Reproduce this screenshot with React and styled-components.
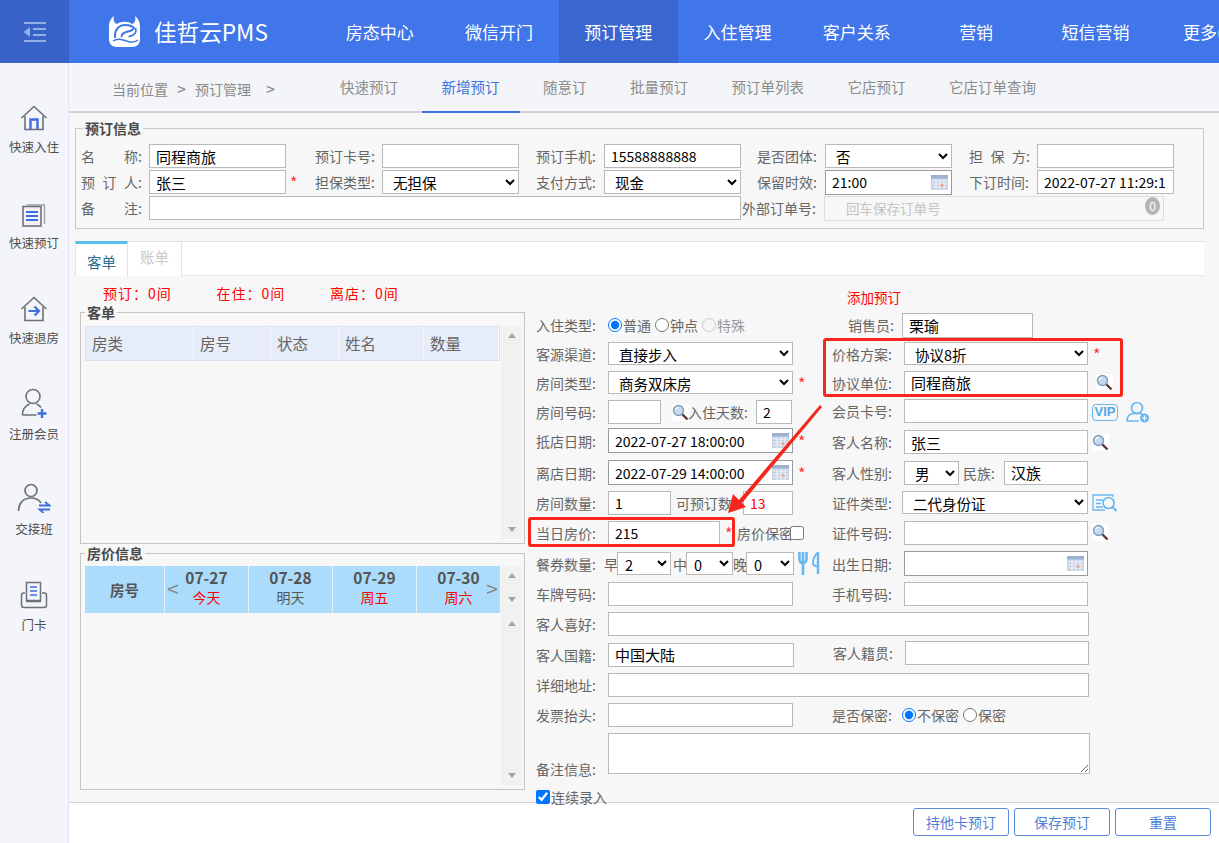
import React from 'react';
import styled, { createGlobalStyle } from 'styled-components';

const GlobalStyle = createGlobalStyle`
  html, body {
    margin: 0;
    height: 100%;
    overflow: hidden;
    background: #fff;
  }
  body, input, select, textarea, button {
    font-family: "Noto Sans CJK SC", "Liberation Sans", sans-serif;
  }
  * {
    box-sizing: border-box;
  }
`;

const NAV = ['房态中心', '微信开门', '预订管理', '入住管理', '客户关系', '营销', '短信营销', '更多('];
const SUB = ['快速预订', '新增预订', '随意订', '批量预订', '预订单列表', '它店预订', '它店订单查询'];

const HomeIcon = () => (
  <svg width="28" height="26" viewBox="0 0 28 26" fill="none">
    <path d="M1.5 13 14 1.5 26.5 13" stroke="#6d7178" strokeWidth="1.6" />
    <path d="M5 11v13.5h18V11" stroke="#6d7178" strokeWidth="1.6" />
    <path d="M10.5 24v-9.5h7V24" stroke="#3f6fdc" strokeWidth="2.4" />
  </svg>
);
const BookIcon = () => (
  <svg width="24" height="24" viewBox="0 0 24 24" fill="none">
    <rect x="1" y="3.5" width="18" height="19.5" stroke="#6d7178" strokeWidth="1.6" />
    <path d="M5 2h17.5v19" stroke="#9a9da3" strokeWidth="1.3" />
    <path d="M4 9h12M4 13h12M4 17h12" stroke="#3f6fdc" strokeWidth="2" />
  </svg>
);
const CheckoutIcon = () => (
  <svg width="28" height="26" viewBox="0 0 28 26" fill="none">
    <path d="M1.5 13 14 1.5 26.5 13" stroke="#6d7178" strokeWidth="1.6" />
    <path d="M5 11v13.5h18V11" stroke="#6d7178" strokeWidth="1.6" />
    <path d="M8.5 15h10M14.5 10.5 19 15l-4.5 4.5" stroke="#3f6fdc" strokeWidth="2.2" />
  </svg>
);
const MemberIcon = () => (
  <svg width="26" height="30" viewBox="0 0 26 30" fill="none">
    <circle cx="12" cy="8.5" r="7" stroke="#6d7178" strokeWidth="1.6" />
    <path d="M1.5 27c0-6 3.5-9.5 7-11M15.5 16c2 .8 3.5 1.8 4.5 3.5M1.5 27h14" stroke="#6d7178" strokeWidth="1.6" />
    <path d="M21 21v9M16.5 25.5h9" stroke="#3f6fdc" strokeWidth="2.4" />
  </svg>
);
const ShiftIcon = () => (
  <svg width="34" height="30" viewBox="0 0 34 30" fill="none">
    <circle cx="14" cy="7.5" r="6" stroke="#6d7178" strokeWidth="1.7" />
    <path d="M1.5 28c0-8 5-13 12.5-13 4.5 0 8 2 10 5" stroke="#6d7178" strokeWidth="1.7" />
    <path d="M22 22.5h10.5L28 19M33 26.5H22.5l4 3.5" stroke="#3f6fdc" strokeWidth="1.8" />
  </svg>
);
const CardIcon = () => (
  <svg width="28" height="28" viewBox="0 0 28 28" fill="none">
    <path d="M6.5 1.5h14v18h-14z" stroke="#6d7178" strokeWidth="1.5" />
    <path d="M10 6h7M10 10h7M10 14h7" stroke="#3f6fdc" strokeWidth="1.5" />
    <path d="M5 12H3.500C2 12 1.500 13 1.500 14.500V24c0 1.500 1 2.500 2.500 2.500h20c1.500 0 2.500-1 2.500-2.500v-9.500c0-1.500-.5-2.500-2-2.500H22M6 20.500h15" stroke="#6d7178" strokeWidth="1.5" />
  </svg>
);
const SIDE = [
  ['快速入住', HomeIcon],
  ['快速预订', BookIcon],
  ['快速退房', CheckoutIcon],
  ['注册会员', MemberIcon],
  ['交接班', ShiftIcon],
  ['门卡', CardIcon],
];

const Calendar = () => (
  <svg width="17" height="15" viewBox="0 0 17 15">
    <rect width="17" height="15" rx="1" fill="#c6d3e6" />
    <rect width="17" height="3.5" fill="#9db2d2" />
    <path d="M1 6h15M1 9h15M1 12h15M5 4v11M9 4v11M13 4v11" stroke="#eef2f8" strokeWidth="1" />
    <rect x="9.5" y="9" width="3" height="3" fill="#eda8a0" />
  </svg>
);
const Magnifier = () => (
  <svg width="17" height="17" viewBox="0 0 17 17">
    <rect width="17" height="17" fill="#fff" />
    <path d="m10 10 5.5 5.5" stroke="#5d3a2c" strokeWidth="2.4" />
    <circle cx="6.5" cy="6.5" r="5" fill="#c5d9ee" stroke="#7f9cbc" strokeWidth="1.4" />
    <path d="M3.5 6c.3-1.5 1.2-2.3 2.700-2.600" stroke="#fff" strokeWidth="1.2" fill="none" />
  </svg>
);
const UserPlus = () => (
  <svg width="24" height="22" viewBox="0 0 24 22" fill="none">
    <circle cx="11" cy="7" r="5.5" stroke="#67b7f2" strokeWidth="1.7" />
    <path d="M1 20c0-4.500 2.500-7 6-7.500h7c1.500.3 2.500 1 3.500 2M1 20h12" stroke="#67b7f2" strokeWidth="1.7" />
    <circle cx="18.5" cy="17" r="4.5" fill="#67b7f2" />
    <path d="M16 17h5M18.500 14.500v5" stroke="#fff" strokeWidth="1.2" />
  </svg>
);
const IdSearch = () => (
  <svg width="25" height="18" viewBox="0 0 25 18" fill="none">
    <path d="M21 3V1H1v15h12" stroke="#67b7f2" strokeWidth="1.3" />
    <path d="M4 6h7M4 9.5h5M4 13h7" stroke="#67b7f2" strokeWidth="1.3" />
    <circle cx="16.5" cy="9" r="5.5" stroke="#67b7f2" strokeWidth="1.6" />
    <path d="m20.5 13 4 4" stroke="#67b7f2" strokeWidth="2" />
  </svg>
);
const Cutlery = () => (
  <svg width="22" height="23" viewBox="0 0 22 23" fill="none">
    <path d="M1.5 0v7c0 2.500 1.500 4 3.500 4s3.500-1.500 3.500-4V0M5 0v23" stroke="#67b7f2" strokeWidth="2.6" />
    <path d="M20 0v22" stroke="#67b7f2" strokeWidth="2.4" />
    <path d="M19.500 1c-3 2-4.500 7-4.500 10 0 2 1 3 4.500 3.500" stroke="#67b7f2" strokeWidth="2" />
  </svg>
);

const App = () => (
  <Page>
    <GlobalStyle />
    <Header>
      <Toggle>
        <svg width="24" height="20" viewBox="0 0 24 20" fill="none">
          <path d="M1 1h22M10 7h13M10 13h13M1 19h22" stroke="#94aee6" strokeWidth="1.8" />
          <path d="M7 5v10L0.5 10z" fill="#94aee6" />
        </svg>
      </Toggle>
      <Brand>
        <svg width="33" height="33" viewBox="0 0 33 33" fill="none">
          <path
            fill="#fff"
            d="M6 1C2 4 1 8 1 12v12c0 5 3 8 8 8h15c5 0 8-3 8-8V12c0-4-1-8-5-11 1 4 0 7-3 8-4-3-11-3-15 0C6 8 5 5 6 1z"
          />
          <path d="M7 23C6 15 11 10 17 10c4 0 7 1 9 3-2 4-7 3-10 5-2 1-3 3-2 4" stroke="#4076e9" strokeWidth="2" />
          <path d="M27.500 13c1.500 4-1 8-7 8.500" stroke="#4076e9" strokeWidth="1.6" />
          <path d="M5 26c5-3.500 10-1 15 .5 4 1.200 7 .8 10-1.500" stroke="#4076e9" strokeWidth="1.5" />
        </svg>
        <BrandName>佳哲云PMS</BrandName>
      </Brand>
      <Nav>
        {NAV.map((n, i) => (
          <NavItem key={n} $active={n === '预订管理'} $last={i === NAV.length - 1}>{n}</NavItem>
        ))}
      </Nav>
    </Header>
    <Body>
      <Sidebar>
        {SIDE.map(([label, Icon]) => (
          <SideItem key={label}>
            <SideIcon><Icon /></SideIcon>
            <span>{label}</span>
          </SideItem>
        ))}
      </Sidebar>
      <Content>
        <SubBar>
          <Crumb>当前位置<CrumbSep>&gt;</CrumbSep>预订管理<CrumbSep $wide>&gt;</CrumbSep></Crumb>
          <SubTabs>
            {SUB.map((s) => (
              <SubTab key={s} $active={s === '新增预订'}>{s}</SubTab>
            ))}
          </SubTabs>
        </SubBar>
        <Main>
          <InfoBox>
            <Legend>预订信息</Legend>
            <InfoRow>
              <Label $w={68} $spread $pr={7}><span>名</span><span>称:</span></Label>
              <TextInput $w={137} $cn defaultValue="同程商旅" />
              <Label $w={60} $ml={29}>预订卡号:</Label>
              <TextInput $w={137} $ml={7} />
              <Label $w={60} $ml={17}>预订手机:</Label>
              <TextInput $w={137} $ml={8} defaultValue="15588888888" />
              <Label $w={60} $ml={16}>是否团体:</Label>
              <Select $w={127} $ml={8}><option>否</option></Select>
              <Label $w={61} $ml={17} $spread><span>担</span><span>保</span><span>方:</span></Label>
              <TextInput $w={137} $ml={7} />
            </InfoRow>
            <InfoRow>
              <Label $w={68} $spread $pr={7}><span>预</span><span>订</span><span>人:</span></Label>
              <TextInput $w={137} $cn defaultValue="张三" />
              <Star $w={25} $ml={4}>*</Star>
              <Label $w={60}>担保类型:</Label>
              <Select $w={137} $ml={7}><option>无担保</option></Select>
              <Label $w={60} $ml={17}>支付方式:</Label>
              <Select $w={137} $ml={8}><option>现金</option></Select>
              <Label $w={60} $ml={16}>保留时效:</Label>
              <DateBox $w={127} $ml={8} value="21:00" />
              <Label $w={61} $ml={17}>下订时间:</Label>
              <TextInput $w={137} $ml={7} defaultValue="2022-07-27 11:29:11" />
            </InfoRow>
            <InfoRow>
              <Label $w={68} $spread $pr={7}><span>备</span><span>注:</span></Label>
              <TextInput $w={592} />
              <Label $w={75} $ml={1}>外部订单号:</Label>
              <OrderBox>
                回车保存订单号
                <OrderBadge>0</OrderBadge>
              </OrderBox>
            </InfoRow>
          </InfoBox>

          <TabBar>
            <Tab $active>客单</Tab>
            <Tab>账单</Tab>
          </TabBar>

          <Columns>
            <LeftCol>
              <Stats>
                <span>预订：0间</span>
                <span>在住：0间</span>
                <span>离店：0间</span>
              </Stats>
              <GuestBox>
                <Legend $small>客单</Legend>
                <TableWrap>
                  <TableMain>
                    <GuestHead>
                      {['房类', '房号', '状态', '姓名', '数量'].map((h) => (
                        <span key={h}>{h}</span>
                      ))}
                    </GuestHead>
                  </TableMain>
                  <ScrollBar>
                    <Arrow $up />
                    <Arrow />
                  </ScrollBar>
                </TableWrap>
              </GuestBox>
              <PriceBox>
                <Legend $small>房价信息</Legend>
                <TableWrap>
                  <TableMain>
                    <PriceHead>
                      <PriceRoom>房号</PriceRoom>
                      <PriceDay>
                        <Pager $left>&lt;</Pager>
                        <b>07-27</b>
                        <DayName $red>今天</DayName>
                      </PriceDay>
                      <PriceDay>
                        <b>07-28</b>
                        <DayName>明天</DayName>
                      </PriceDay>
                      <PriceDay>
                        <b>07-29</b>
                        <DayName $red>周五</DayName>
                      </PriceDay>
                      <PriceDay>
                        <b>07-30</b>
                        <DayName $red>周六</DayName>
                        <Pager>&gt;</Pager>
                      </PriceDay>
                    </PriceHead>
                  </TableMain>
                  <ScrollBar>
                    <ArrowStack>
                      <Arrow $up />
                      <Arrow />
                      <Arrow $up />
                    </ArrowStack>
                    <Arrow />
                  </ScrollBar>
                </TableWrap>
              </PriceBox>
            </LeftCol>

            <FormCol>
              <AddLink>添加预订</AddLink>
              <FormRow $h={28}>
                <Field>
                  <Label $w={72}>入住类型:</Label>
                  <RadioLabel><input type="radio" name="stay" defaultChecked />普通</RadioLabel>
                  <RadioLabel><input type="radio" name="stay" />钟点</RadioLabel>
                  <RadioLabel $off><input type="radio" name="stay" disabled />特殊</RadioLabel>
                </Field>
                <Field>
                  <Label $w={70} $indent={16}>销售员:</Label>
                  <TextInput $w={131} $h={25} $cn defaultValue="栗瑜" />
                </Field>
              </FormRow>
              <FormRow $h={29}>
                <Field>
                  <Label $w={72}>客源渠道:</Label>
                  <Select $w={185} $h={23}><option>直接步入</option></Select>
                </Field>
                <Field>
                  <Label $w={72}>价格方案:</Label>
                  <Select $w={184} $h={23}><option>协议8折</option></Select>
                  <Star $w={20} $ml={5}>*</Star>
                </Field>
              </FormRow>
              <FormRow $h={29}>
                <Field>
                  <Label $w={72}>房间类型:</Label>
                  <Select $w={185} $h={23}><option>商务双床房</option></Select>
                  <Star $w={20} $ml={5}>*</Star>
                </Field>
                <Field>
                  <Label $w={72}>协议单位:</Label>
                  <TextInput $w={184} $cn defaultValue="同程商旅" />
                  <IconSlot $ml={8}><Magnifier /></IconSlot>
                </Field>
              </FormRow>
              <FormRow $h={30}>
                <Field>
                  <Label $w={72}>房间号码:</Label>
                  <TextInput $w={53} />
                  <IconSlot $ml={11}><Magnifier /></IconSlot>
                  <Label $w={60} $ml={-1}>入住天数:</Label>
                  <TextInput $w={36} $ml={8} defaultValue="2" />
                </Field>
                <Field $dy={-3}>
                  <Label $w={72}>会员卡号:</Label>
                  <TextInput $w={184} />
                  <VipTag>VIP</VipTag>
                  <IconSlot $ml={8} $mt={3}><UserPlus /></IconSlot>
                </Field>
              </FormRow>
              <FormRow $h={30}>
                <Field $dy={-3}>
                  <Label $w={72}>抵店日期:</Label>
                  <DateBox $w={185} value="2022-07-27 18:00:00" />
                  <Star $w={20} $ml={5}>*</Star>
                </Field>
                <Field>
                  <Label $w={72}>客人名称:</Label>
                  <TextInput $w={184} $cn defaultValue="张三" />
                  <IconSlot $ml={4}><Magnifier /></IconSlot>
                </Field>
              </FormRow>
              <FormRow $h={31}>
                <Field>
                  <Label $w={72}>离店日期:</Label>
                  <DateBox $w={185} value="2022-07-29 14:00:00" />
                  <Star $w={20} $ml={5}>*</Star>
                </Field>
                <Field>
                  <Label $w={72}>客人性别:</Label>
                  <Select $w={55} $h={24}><option>男</option></Select>
                  <Label $w={42} $ml={4}>民族:</Label>
                  <TextInput $w={84} $ml={-1} $cn defaultValue="汉族" />
                </Field>
              </FormRow>
              <FormRow $h={29}>
                <Field>
                  <Label $w={72}>房间数量:</Label>
                  <TextInput $w={63} defaultValue="1" />
                  <Label $w={60} $ml={5}>可预订数:</Label>
                  <TextInput $w={50} $ml={7} $red defaultValue="13" />
                </Field>
                <Field>
                  <Label $w={72}>证件类型:</Label>
                  <Select $w={186} $h={23} $ml={-2}><option>二代身份证</option></Select>
                  <IconSlot $ml={4}><IdSearch /></IconSlot>
                </Field>
              </FormRow>
              <FormRow $h={31}>
                <Field>
                  <Label $w={72}>当日房价:</Label>
                  <TextInput $w={112} defaultValue="215" />
                  <Star $w={12} $ml={5}>*</Star>
                  <Label $w={53}>房价保密</Label>
                  <Check type="checkbox" />
                </Field>
                <Field>
                  <Label $w={72}>证件号码:</Label>
                  <TextInput $w={184} />
                  <IconSlot $ml={4}><Magnifier /></IconSlot>
                </Field>
              </FormRow>
              <FormRow $h={31}>
                <Field>
                  <Label $w={72}>餐券数量:</Label>
                  <Label $w={13} $ml={-4}>早</Label>
                  <Select $w={54} $h={23} $tight><option>2</option></Select>
                  <Label $w={13} $ml={2}>中</Label>
                  <Select $w={47} $h={23} $tight><option>0</option></Select>
                  <Label $w={13}>晚</Label>
                  <Select $w={48} $h={23} $tight><option>0</option></Select>
                  <IconSlot $ml={4}><Cutlery /></IconSlot>
                </Field>
                <Field>
                  <Label $w={72}>出生日期:</Label>
                  <DateBox $w={184} value="" />
                </Field>
              </FormRow>
              <FormRow $h={30}>
                <Field>
                  <Label $w={72}>车牌号码:</Label>
                  <TextInput $w={185} />
                </Field>
                <Field>
                  <Label $w={72}>手机号码:</Label>
                  <TextInput $w={184} />
                </Field>
              </FormRow>
              <FormRow $h={30} $wide>
                <Field>
                  <Label $w={72}>客人喜好:</Label>
                  <TextInput $w={481} />
                </Field>
              </FormRow>
              <FormRow $h={31}>
                <Field>
                  <Label $w={72}>客人国籍:</Label>
                  <TextInput $w={186} $cn defaultValue="中国大陆" />
                </Field>
                <Field $dy={-3}>
                  <Label $w={72} $ml={1}>客人籍贯:</Label>
                  <TextInput $w={184} />
                </Field>
              </FormRow>
              <FormRow $h={30} $wide>
                <Field>
                  <Label $w={72}>详细地址:</Label>
                  <TextInput $w={481} />
                </Field>
              </FormRow>
              <FormRow $h={30}>
                <Field>
                  <Label $w={72}>发票抬头:</Label>
                  <TextInput $w={185} />
                </Field>
                <Field>
                  <Label $w={70}>是否保密:</Label>
                  <RadioLabel><input type="radio" name="secret" defaultChecked />不保密</RadioLabel>
                  <RadioLabel><input type="radio" name="secret" />保密</RadioLabel>
                </Field>
              </FormRow>
              <FormRow $h={46} $wide $bottom>
                <NotesField>
                  <NotesLabel $w={72}>备注信息:</NotesLabel>
                  <Notes />
                </NotesField>
              </FormRow>
              <ContinueRow>
                <input type="checkbox" defaultChecked />连续录入
              </ContinueRow>
            </FormCol>
          </Columns>
        </Main>
        <Footer>
          <FootButton>持他卡预订</FootButton>
          <FootButton>保存预订</FootButton>
          <FootButton>重置</FootButton>
        </Footer>
        <HighlightPlan />
        <HighlightPrice />
        <ArrowMark width="100" height="116" viewBox="0 0 100 116" fill="none">
          <path d="M95 2 97 4 17 100 21 104 3 110 8 91 14 97z" fill="#f5261b" />
        </ArrowMark>
      </Content>
    </Body>
  </Page>
);

export default App;

const DateBox = ({ $w, $ml, value }) => (
  <DateWrap $w={$w} $ml={$ml}>
    <DateInput defaultValue={value} />
    <DateIcon><Calendar /></DateIcon>
  </DateWrap>
);

const Page = styled.div`
  width: 1219px;
  height: 843px;
  display: flex;
  flex-direction: column;
  overflow: hidden;
`;
const Header = styled.header`
  height: 63px;
  flex: none;
  display: flex;
  background: #4076e9;
  color: #fff;
`;
const Toggle = styled.div`
  width: 69px;
  display: flex;
  align-items: center;
  justify-content: center;
  background: #3a63c9;
`;
const Brand = styled.div`
  width: 251px;
  padding-left: 39px;
  display: flex;
  align-items: center;
  gap: 13px;
`;
const BrandName = styled.span`
  font-size: 22.6px;
  font-weight: 400;
`;
const Nav = styled.nav`
  flex: 1;
  display: flex;
  overflow: hidden;
`;
const NavItem = styled.div`
  flex: none;
  width: 119.3px;
  display: flex;
  align-items: center;
  justify-content: ${(p) => (p.$last ? 'flex-start' : 'center')};
  padding-left: ${(p) => (p.$last ? '28px' : '0')};
  font-size: 17px;
  white-space: nowrap;
  background: ${(p) => (p.$active ? '#3a66cf' : 'transparent')};
`;
const Body = styled.div`
  flex: 1;
  display: flex;
  min-height: 0;
`;
const Sidebar = styled.aside`
  width: 69px;
  flex: none;
  padding-top: 30px;
  background: #f3f5fa;
  border-right: 1px solid #e3e6ee;
`;
const SideItem = styled.div`
  height: 95.6px;
  display: flex;
  flex-direction: column;
  align-items: center;
  color: #4d4d4d;
  font-size: 12.5px;
  line-height: 18px;
`;
const SideIcon = styled.div`
  height: 37px;
  margin-top: 8px;
  display: flex;
  align-items: flex-end;
  padding-bottom: 7px;
`;
const Content = styled.div`
  position: relative;
  flex: 1;
  display: flex;
  flex-direction: column;
  min-width: 0;
`;
const SubBar = styled.div`
  height: 50px;
  flex: none;
  display: flex;
  background: #f3f5f9;
  border-bottom: 2px solid #d3d3d3;
`;
const Crumb = styled.div`
  width: 249px;
  padding: 15px 0 0 43px;
  color: #8a8a8a;
  font-size: 14px;
  line-height: 20px;
  white-space: nowrap;
`;
const CrumbSep = styled.span`
  font-size: 16px;
  margin: ${(p) => (p.$wide ? '0 0 0 15px' : '0 9px')};
`;
const SubTabs = styled.div`
  display: flex;
  margin-left: 2px;
`;
const SubTab = styled.div`
  height: 50px;
  padding: 0 20px 2px;
  display: flex;
  align-items: center;
  margin-right: 3.5px;
  font-size: 14.5px;
  white-space: nowrap;
  color: ${(p) => (p.$active ? '#3f72e0' : '#8c8c8c')};
  border-bottom: 2px solid ${(p) => (p.$active ? '#3f72e0' : 'transparent')};
`;
const Main = styled.main`
  height: 689px;
  flex: none;
  padding: 15px 15px 0 6px;
  background: #f7f7f7;
`;
const InfoBox = styled.section`
  height: 101px;
  position: relative;
  padding: 14px 0 0 5px;
  border: 1px solid #c9c9c9;
  display: flex;
  flex-direction: column;
`;
const Legend = styled.div`
  position: absolute;
  top: -9px;
  left: ${(p) => (p.$small ? 4 : 7)}px;
  padding: 0 2px;
  background: #f7f7f7;
  color: #4a4a4a;
  font-size: 14px;
  line-height: 17px;
  font-weight: 700;
`;
const InfoRow = styled.div`
  height: 26px;
  display: flex;
  align-items: center;
`;
const Label = styled.label`
  flex: none;
  width: ${(p) => p.$w}px;
  margin-left: ${(p) => p.$ml || 0}px;
  padding-left: ${(p) => p.$indent || 0}px;
  padding-right: ${(p) => p.$pr || 0}px;
  color: #666;
  font-size: 14px;
  line-height: 18px;
  white-space: nowrap;
  ${(p) => p.$spread && 'display: flex; justify-content: space-between;'}
`;
const TextInput = styled.input`
  flex: none;
  width: ${(p) => p.$w}px;
  height: ${(p) => p.$h || 24}px;
  margin-left: ${(p) => p.$ml || 0}px;
  padding: 0 6px;
  border: 1px solid #b9b9b9;
  border-radius: 0;
  background: #fff;
  outline: none;
  font-size: ${(p) => (p.$cn ? 15 : 14)}px;
  color: ${(p) => (p.$red ? '#f00' : '#000')};
`;
const Select = styled.select`
  flex: none;
  width: ${(p) => p.$w}px;
  height: ${(p) => p.$h || 24}px;
  margin-left: ${(p) => p.$ml || 0}px;
  padding: 0 ${(p) => (p.$tight ? '3px' : '6px')};
  border: 1px solid #b9b9b9;
  border-radius: 0;
  background-color: #fff;
  font-size: 14.5px;
  color: #000;
  position: relative;
`;
const Star = styled.span`
  flex: none;
  width: ${(p) => p.$w}px;
  margin-left: ${(p) => p.$ml || 0}px;
  color: #f33;
  font-size: 16px;
  line-height: 14px;
`;
const DateWrap = styled.div`
  flex: none;
  position: relative;
  width: ${(p) => p.$w}px;
  margin-left: ${(p) => p.$ml || 0}px;
`;
const DateInput = styled.input`
  display: block;
  width: 100%;
  height: 25px;
  padding: 0 6px;
  border: 1px solid #9a9a9a;
  background: #fff;
  outline: none;
  font-size: 14px;
  color: #000;
`;
const DateIcon = styled.span`
  position: absolute;
  top: 5px;
  right: 4px;
  line-height: 0;
`;
const OrderBox = styled.div`
  position: relative;
  width: 340px;
  height: 25px;
  margin-left: 7px;
  padding-left: 21px;
  border: 1px solid #ddd;
  background: #f7f7f7;
  color: #c4c4c4;
  font-size: 13.5px;
  line-height: 23px;
`;
const OrderBadge = styled.span`
  position: absolute;
  top: 0;
  right: 3px;
  width: 15px;
  height: 18px;
  border-radius: 50%;
  background: #b5b5b5;
  color: #fff;
  font-size: 12px;
  line-height: 17px;
  text-align: center;
`;
const TabBar = styled.div`
  margin-top: 12px;
  height: 35px;
  display: flex;
  background: #fff;
  border-top: 1px solid #dde3e8;
  border-bottom: 1px solid #e6e6e6;
`;
const Tab = styled.div`
  width: ${(p) => (p.$active ? 53 : 54)}px;
  padding-top: ${(p) => (p.$active ? 8 : 5)}px;
  margin-top: -1px;
  height: 35px;
  text-align: center;
  font-size: 14.5px;
  line-height: 20px;
  background: #fff;
  color: ${(p) => (p.$active ? '#2f6f8f' : '#c9c9c9')};
  border-top: ${(p) => (p.$active ? '3px solid #5bc0e8' : '1px solid #dde3e8')};
  border-right: 1px solid #dde3e8;
  ${(p) => p.$active && 'border-left: 1px solid #dde3e8;'}
`;
const Columns = styled.div`
  display: flex;
`;
const LeftCol = styled.div`
  width: 445px;
  margin-left: 5px;
  flex: none;
`;
const Stats = styled.div`
  height: 36px;
  padding: 8px 0 0 23px;
  display: grid;
  grid-template-columns: repeat(3, 113.5px);
  color: #f00;
  font-size: 14px;
  line-height: 18px;
  letter-spacing: 1px;
`;
const GuestBox = styled.section`
  position: relative;
  height: 232px;
  padding: 13px 5px 0 4px;
  border: 1px solid #c4c4c4;
`;
const PriceBox = styled(GuestBox)`
  height: 237px;
  margin-top: 9px;
  padding-top: 12px;
`;
const TableWrap = styled.div`
  display: flex;
  height: calc(100% - 4px);
`;
const TableMain = styled.div`
  width: 415px;
  flex: none;
`;
const GuestHead = styled.div`
  height: 35px;
  display: grid;
  grid-template-columns: 108px 77px 68px 85px 1fr;
  background: #e6edf8;
  border: 1px solid #dbe3f0;
  color: #666;
  font-size: 15.5px;
  span {
    padding-left: 6px;
    line-height: 33px;
    border-right: 1px solid #f7f9fc;
  }
`;
const PriceHead = styled.div`
  height: 47px;
  display: grid;
  grid-template-columns: 79px repeat(4, 1fr);
  gap: 1px;
  background: #e8f2fb;
  color: #555;
`;
const PriceRoom = styled.div`
  background: #abdcfc;
  font-size: 14.5px;
  font-weight: 700;
  line-height: 47px;
  text-align: center;
`;
const PriceDay = styled.div`
  position: relative;
  background: #abdcfc;
  text-align: center;
  font-size: 15.5px;
  line-height: 20px;
  padding-top: 1px;
  b {
    display: block;
  }
`;
const DayName = styled.div`
  font-size: 14px;
  color: ${(p) => (p.$red ? '#f00' : '#555')};
`;
const Pager = styled.span`
  position: absolute;
  top: 12px;
  ${(p) => (p.$left ? 'left: 2px;' : 'right: 2px;')}
  color: #888;
  font-size: 21px;
  line-height: 20px;
`;
const ScrollBar = styled.div`
  width: 21px;
  flex: none;
  margin-left: 1px;
  padding: 7px 0;
  display: flex;
  flex-direction: column;
  justify-content: space-between;
  align-items: center;
  background: #f1f1f1;
`;
const ArrowStack = styled.div`
  display: flex;
  flex-direction: column;
  gap: 19px;
`;
const Arrow = styled.i`
  display: block;
  width: 0;
  height: 0;
  border-left: 4.5px solid transparent;
  border-right: 4.5px solid transparent;
  ${(p) => (p.$up ? 'border-bottom: 5px solid #a5a5a5;' : 'border-top: 5px solid #a5a5a5;')}
`;
const FormCol = styled.div`
  position: relative;
  flex: 1;
  margin-left: 11px;
  padding-top: 35px;
`;
const AddLink = styled.div`
  position: absolute;
  top: 12px;
  left: 311px;
  color: #f00;
  font-size: 13.5px;
  line-height: 18px;
`;
const FormRow = styled.div`
  height: ${(p) => p.$h}px;
  display: grid;
  grid-template-columns: ${(p) => (p.$wide ? '1fr' : '296px 1fr')};
  align-items: ${(p) => (p.$bottom ? 'start' : 'center')};
`;
const Field = styled.div`
  display: flex;
  align-items: center;
  margin-top: ${(p) => p.$dy || 0}px;
`;
const NotesField = styled(Field)`
  align-items: flex-end;
`;
const NotesLabel = styled(Label)`
  margin-bottom: -4px;
`;
const RadioLabel = styled.label`
  display: inline-flex;
  align-items: center;
  margin-right: 4px;
  color: ${(p) => (p.$off ? '#999' : '#666')};
  font-size: 14px;
  white-space: nowrap;
  input {
    width: 14px;
    height: 14px;
    margin: 0 1px 0 0;
  }
`;
const Check = styled.input`
  width: 14px;
  height: 14px;
  margin: 0;
`;
const IconSlot = styled.span`
  flex: none;
  margin-left: ${(p) => p.$ml || 0}px;
  margin-top: ${(p) => p.$mt || 0}px;
  line-height: 0;
`;
const VipTag = styled.span`
  flex: none;
  width: 26px;
  height: 17px;
  margin: 4px 0 0 4px;
  border: 1.5px solid #67b7f2;
  border-radius: 4px;
  color: #52a8ea;
  font-family: "Liberation Sans", sans-serif;
  font-size: 13px;
  font-weight: 700;
  line-height: 14px;
  text-align: center;
`;
const Notes = styled.textarea`
  width: 482px;
  height: 41px;
  border: 1px solid #b9b9b9;
  background: #fff;
  outline: none;
  margin-top: 3px;
`;
const ContinueRow = styled.label`
  display: flex;
  align-items: center;
  height: 20px;
  margin: 11px 0 0 0;
  color: #666;
  font-size: 14px;
  position: relative;
  z-index: 1;
  input {
    width: 14px;
    height: 14px;
    margin: 0 1px 0 0;
  }
`;
const Footer = styled.footer`
  flex: 1;
  padding: 5px 8px 0 0;
  display: flex;
  justify-content: flex-end;
  align-items: flex-start;
  gap: 5px;
  background: #fff;
  border-top: 1px solid #d4d4d4;
`;
const FootButton = styled.button`
  width: 96px;
  height: 28px;
  padding: 0;
  border: 1px solid #5a8ad9;
  border-radius: 3px;
  background: #fff;
  color: #4f80d8;
  font-size: 14px;
`;
const HighlightPlan = styled.div`
  position: absolute;
  left: 754px;
  top: 275px;
  width: 300px;
  height: 59px;
  border: 3px solid #f5261b;
  border-radius: 3px;
  pointer-events: none;
`;
const HighlightPrice = styled(HighlightPlan)`
  left: 459px;
  top: 454px;
  width: 207px;
  height: 30px;
`;
const ArrowMark = styled.svg`
  position: absolute;
  left: 656px;
  top: 340px;
  pointer-events: none;
`;
